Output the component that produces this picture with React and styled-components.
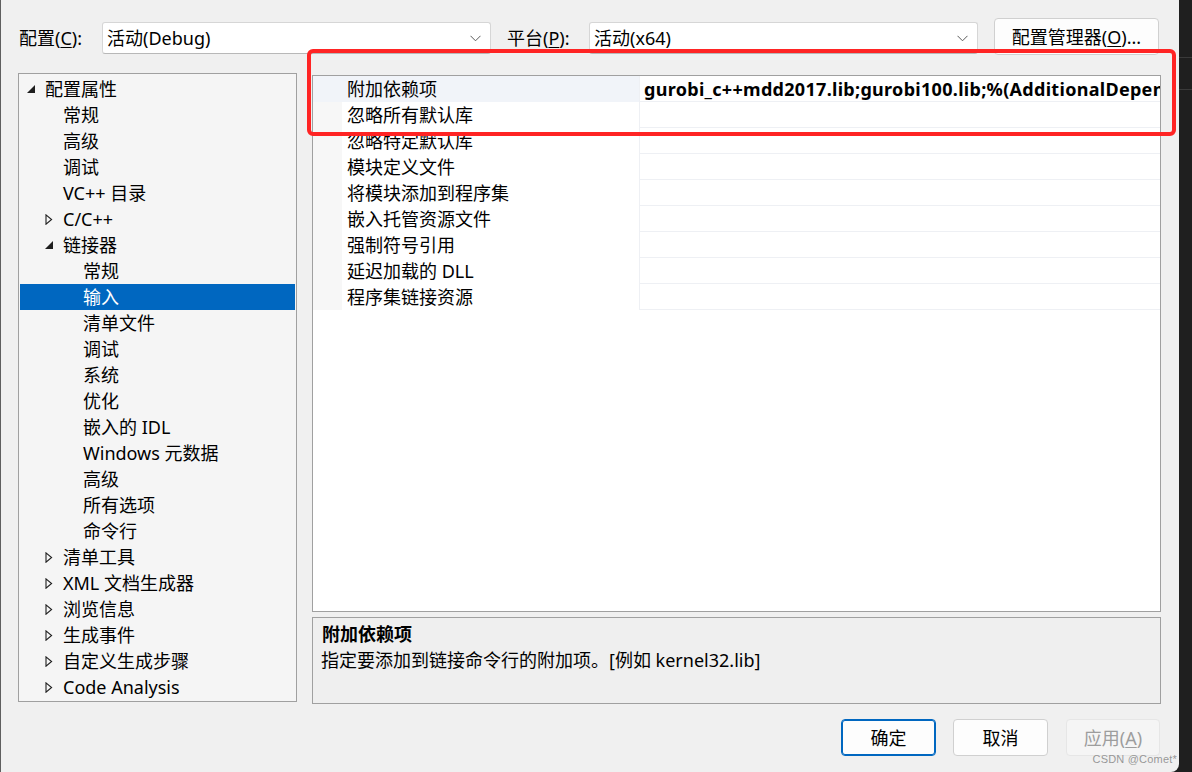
import React from "react";
import styled, { createGlobalStyle } from "styled-components";

const Global = createGlobalStyle`
  html, body { margin: 0; padding: 0; }
  body {
    width: 1192px;
    height: 772px;
    overflow: hidden;
    background:
      linear-gradient(#3a3a3a, #3a3a3a) 0 57px / 100% 1px no-repeat,
      linear-gradient(#3a3a3a, #3a3a3a) 0 89px / 100% 1px no-repeat,
      #1f1f1f;
    font-family: "Noto Sans", "Noto Sans CJK SC", sans-serif;
  }
  u { text-decoration: underline; text-underline-offset: 2px; text-decoration-thickness: 1px; }
`;

const Dialog = styled.div`
  position: relative;
  box-sizing: border-box;
  width: 1179px;
  height: 772px;
  background: #f0f0f0;
  border-left: 1px solid #5f5f5f;
  border-bottom-right-radius: 8px;
  padding: 18px 18px 0 17px;
  display: flex;
  flex-direction: column;
  color: #000;
  font-size: 18px;
`;

const TopBar = styled.div`
  display: flex;
  align-items: flex-start;
  height: 36px;
`;

const Label = styled.div`
  width: ${(p) => p.$w}px;
  flex: none;
  margin-left: ${(p) => p.$ml || 0}px;
  line-height: 26px;
  margin-top: 7px;
  padding-left: 1px;
`;

const Combo = styled.div`
  box-sizing: border-box;
  width: 389px;
  height: 32px;
  margin-top: 4px;
  flex: none;
  background: #fff;
  border: 1px solid #d6d6d6;
  border-bottom-color: #b8b8b8;
  border-radius: 3px;
  display: flex;
  align-items: center;
  justify-content: space-between;
  padding: 0 9px 0 4px;
  line-height: 26px;
`;

const Button = styled.button`
  box-sizing: border-box;
  flex: none;
  width: ${(p) => p.$w}px;
  height: ${(p) => p.$h || 37}px;
  margin-left: ${(p) => p.$ml || 0}px;
  font-family: inherit;
  font-size: 18px;
  line-height: 26px;
  padding: 0;
  border-radius: 4px;
  background: ${(p) => (p.$disabled ? "#f5f5f5" : "#fdfdfd")};
  color: ${(p) => (p.$disabled ? "#9d9d9d" : "#000")};
  border: 1px solid
    ${(p) => (p.$primary ? "#0067c0" : p.$disabled ? "#e6e6e6" : "#d0d0d0")};
  box-shadow: ${(p) => (p.$primary ? "inset 0 0 0 1px #0067c0" : "none")};
`;

const Main = styled.div`
  display: flex;
  margin-top: 19px;
  height: 631px;
`;

const TreePanel = styled.div`
  box-sizing: border-box;
  width: 279px;
  height: 629px;
  flex: none;
  background: #f5f5f5;
  border: 1px solid #a0a0a0;
  padding: 2px 1px 0;
`;

const TreeRow = styled.div`
  display: flex;
  align-items: center;
  height: 26px;
  line-height: 26px;
  padding-left: ${(p) => 7 + p.$level * 19 - (p.$level === 1 ? 1 : 0)}px;
  background: ${(p) => (p.$selected ? "#0067c0" : "transparent")};
  color: ${(p) => (p.$selected ? "#fff" : "#000")};
  white-space: nowrap;
`;

const Toggle = styled.span`
  width: 18px;
  flex: none;
  display: flex;
  align-items: center;
`;

const RightCol = styled.div`
  display: flex;
  flex-direction: column;
  margin-left: 15px;
  width: 849px;
  padding-top: 2px;
`;

const GridBox = styled.div`
  box-sizing: border-box;
  height: 537px;
  background: #fff;
  border: 1px solid #a0a0a0;
  overflow: hidden;
`;

const GridRow = styled.div`
  display: grid;
  grid-template-columns: 29px 298px 1fr;
  height: 26px;
  box-sizing: border-box;
  border-bottom: 1px solid #eef0f4;
`;

const Gutter = styled.div`
  background: ${(p) => (p.$active ? "#f1f4f9" : "#f7f7f7")};
`;

const NameCell = styled.div`
  padding: 1px 0 0 5px;
  line-height: 25px;
  background: ${(p) => (p.$active ? "#f1f4f9" : "#fff")};
  border-right: 1px solid #eef0f4;
  white-space: nowrap;
`;

const ValueCell = styled.div`
  padding: 1px 0 0 4px;
  line-height: 25px;
  font-weight: 700;
  letter-spacing: 0.3px;
  white-space: nowrap;
  overflow: hidden;
`;

const Desc = styled.div`
  box-sizing: border-box;
  margin-top: 5px;
  height: 87px;
  background: #efefef;
  border: 1px solid #a0a0a0;
  padding: 3px 9px 0 8px;
  line-height: 26px;
`;

const DescTitle = styled.div`
  font-weight: 700;
  padding-left: 1px;
`;

const Footer = styled.div`
  display: flex;
  justify-content: flex-end;
  margin-top: 15px;
  padding-right: 1px;
`;

const Annotation = styled.div`
  position: absolute;
  left: 306px;
  top: 49px;
  width: 869px;
  height: 87px;
  box-sizing: border-box;
  border: 4px solid #ff2424;
  border-radius: 6px;
  pointer-events: none;
`;

const Watermark = styled.div`
  position: absolute;
  right: 2px;
  bottom: 7px;
  font-family: "Liberation Sans", Arial, sans-serif;
  font-size: 11px;
  color: rgba(120, 120, 120, 0.75);
  letter-spacing: 0.2px;
`;

const Chevron = () => (
  <svg width="11" height="7" viewBox="0 0 11 7">
    <polyline points="0.5,0.8 5.5,5.8 10.5,0.8" fill="none" stroke="#5a5a5a" strokeWidth="1" />
  </svg>
);

const Expanded = ({ color }) => (
  <svg width="8" height="8" viewBox="0 0 8 8">
    <polygon points="8,0 8,8 0,8" fill={color} />
  </svg>
);

const Collapsed = ({ color }) => (
  <svg width="8" height="11" viewBox="0 0 8 11">
    <polygon points="1,0.8 6.6,5.5 1,10.2" fill="none" stroke={color} strokeWidth="1.1" />
  </svg>
);

const tree = [
  { t: "配置属性", l: 0, s: "open" },
  { t: "常规", l: 1 },
  { t: "高级", l: 1 },
  { t: "调试", l: 1 },
  { t: "VC++ 目录", l: 1 },
  { t: "C/C++", l: 1, s: "closed" },
  { t: "链接器", l: 1, s: "open" },
  { t: "常规", l: 2 },
  { t: "输入", l: 2, sel: true },
  { t: "清单文件", l: 2 },
  { t: "调试", l: 2 },
  { t: "系统", l: 2 },
  { t: "优化", l: 2 },
  { t: "嵌入的 IDL", l: 2 },
  { t: "Windows 元数据", l: 2 },
  { t: "高级", l: 2 },
  { t: "所有选项", l: 2 },
  { t: "命令行", l: 2 },
  { t: "清单工具", l: 1, s: "closed" },
  { t: "XML 文档生成器", l: 1, s: "closed" },
  { t: "浏览信息", l: 1, s: "closed" },
  { t: "生成事件", l: 1, s: "closed" },
  { t: "自定义生成步骤", l: 1, s: "closed" },
  { t: "Code Analysis", l: 1, s: "closed" },
];

const props = [
  ["附加依赖项", "gurobi_c++mdd2017.lib;gurobi100.lib;%(AdditionalDependencies)"],
  ["忽略所有默认库", ""],
  ["忽略特定默认库", ""],
  ["模块定义文件", ""],
  ["将模块添加到程序集", ""],
  ["嵌入托管资源文件", ""],
  ["强制符号引用", ""],
  ["延迟加载的 DLL", ""],
  ["程序集链接资源", ""],
];

export default function App() {
  return (
    <>
      <Global />
      <Dialog>
        <TopBar>
          <Label $w={83}>
            配置(<u>C</u>):
          </Label>
          <Combo>
            <span>活动(Debug)</span>
            <Chevron />
          </Combo>
          <Label $w={82} $ml={15}>
            平台(<u>P</u>):
          </Label>
          <Combo>
            <span>活动(x64)</span>
            <Chevron />
          </Combo>
          <Button $w={165} $h={37} $ml={16}>
            配置管理器(<u>O</u>)...
          </Button>
        </TopBar>

        <Main>
          <TreePanel>
            {tree.map((n, i) => (
              <TreeRow key={i} $level={n.l} $selected={n.sel}>
                <Toggle>
                  {n.s === "open" && <Expanded color="#1e1e1e" />}
                  {n.s === "closed" && <Collapsed color="#1e1e1e" />}
                </Toggle>
                {n.t}
              </TreeRow>
            ))}
          </TreePanel>

          <RightCol>
            <GridBox>
              {props.map(([name, value], i) => (
                <GridRow key={i}>
                  <Gutter $active={i === 0} />
                  <NameCell $active={i === 0}>{name}</NameCell>
                  <ValueCell>{value}</ValueCell>
                </GridRow>
              ))}
            </GridBox>
            <Desc>
              <DescTitle>附加依赖项</DescTitle>
              <div>指定要添加到链接命令行的附加项。[例如 kernel32.lib]</div>
            </Desc>
          </RightCol>
        </Main>

        <Footer>
          <Button $w={95} $primary>
            确定
          </Button>
          <Button $w={95} $ml={17}>
            取消
          </Button>
          <Button $w={94} $ml={18} $disabled>
            应用(<u>A</u>)
          </Button>
        </Footer>

        <Annotation />
        <Watermark>CSDN @Comet*</Watermark>
      </Dialog>
    </>
  );
}
